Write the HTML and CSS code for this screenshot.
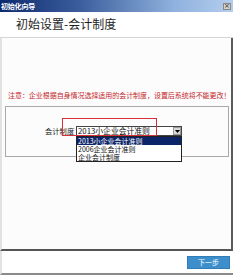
FILE: index.html
```html
<!DOCTYPE html>
<html lang="zh">
<head>
<meta charset="utf-8">
<link rel="stylesheet" href="styles.css">
</head>
<body>
<div class="window">
  <div class="titlebar">
    <span class="title">初始化向导</span>
    <span class="close">×</span>
  </div>
  <div class="header">初始设置-会计制度</div>
  <div class="content">
    <p class="notice">注意：企业根据自身情况选择适用的会计制度，设置后系统将不能更改！</p>
    <div class="group">
      <div class="row">
        <span class="label">会计制度</span>
        <div class="select">
          <span class="value">2013小企业会计准则</span>
          <span class="arrow"><svg width="5" height="3" viewBox="0 0 5 3"><path d="M0 0H5L2.5 3Z" fill="#000"/></svg></span>
          <ul class="list">
            <li class="sel">2013小企业会计准则</li>
            <li>2006企业会计准则</li>
            <li>企业会计制度</li>
          </ul>
        </div>
        <div class="mark"></div>
      </div>
    </div>
  </div>
  <div class="footer">
    <button class="next">下一步</button>
  </div>
</div>
</body>
</html>
```
FILE: styles.css
```css
* { box-sizing: border-box; }
html, body { margin: 0; padding: 0; background: #fff; }
body { width: 236px; height: 276px; overflow: hidden; font-family: "Noto Sans CJK SC", "Liberation Sans", sans-serif; }
.window { width: 233px; height: 275px; display: flex; flex-direction: column; }
.titlebar { height: 12px; background: linear-gradient(to right, #0d2a6e 0%, #3d5f9e 35%, #8fb2de 75%, #b4cdee 100%); display: flex; align-items: center; justify-content: space-between; padding: 0 2px 0 1px; }
.title { color: #fff; font-size: 7px; font-weight: bold; line-height: 9px; letter-spacing: -0.2px; }
.close { width: 8px; height: 7px; background: #d4d0c8; border: 1px solid #888; color: #333; font-size: 7px; line-height: 5px; text-align: center; font-family: "DejaVu Sans", sans-serif; }
.header { height: 26px; border-bottom: 1px solid #d6d6d6; padding: 4px 0 0 16px; font-size: 12px; line-height: 15px; color: #1e1e1e; }
.content { flex: 1; background: #fcfcfc; border-left: 2px solid #e2e2e2; border-right: 2px solid #5a5a5a; border-bottom: 2px solid #555; padding-top: 53px; }
.notice { margin: 0 0 0 6px; font-size: 7px; line-height: 9px; color: #c4262b; white-space: nowrap; letter-spacing: -0.05px; }
.group { margin: 6px 2px 0 3px; height: 51px; border: 1px solid #a8a8a8; padding-top: 19px; }
.row { position: relative; display: flex; align-items: center; padding-left: 39px; }
.label { font-size: 7.3px; line-height: 10px; color: #222; width: 31px; }
.select { position: relative; width: 106px; height: 10px; border: 1px solid #444; background: #fff; display: flex; align-items: center; }
.value { flex: 1; font-size: 7.8px; line-height: 8px; color: #111; padding-left: 1px; white-space: nowrap; }
.arrow { width: 8px; height: 8px; background: #d8d8d8; border: 1px solid #999; display: flex; align-items: center; justify-content: center; }
.list { position: absolute; left: -1px; top: 9px; width: 106px; margin: 0; padding: 0; list-style: none; border: 1px solid #222; background: #fff; }
.list li { height: 8px; font-size: 7px; line-height: 8px; color: #111; padding-left: 1px; white-space: nowrap; }
.list li.sel { background: #0c2468; color: #fff; }
.mark { position: absolute; left: 56px; top: -8px; width: 95px; height: 18px; border: 1.5px solid #d8303a; }
.footer { height: 24px; display: flex; justify-content: flex-end; align-items: center; padding-right: 3px; border-left: 2px solid #e2e2e2; border-bottom: 2px solid #8a8a8a; }
.next { width: 43px; height: 13px; background: #3d8fcc; border: 1px solid #2f7cb8; color: #fff; font-family: inherit; font-size: 7px; line-height: 10px; padding: 0; }
```
